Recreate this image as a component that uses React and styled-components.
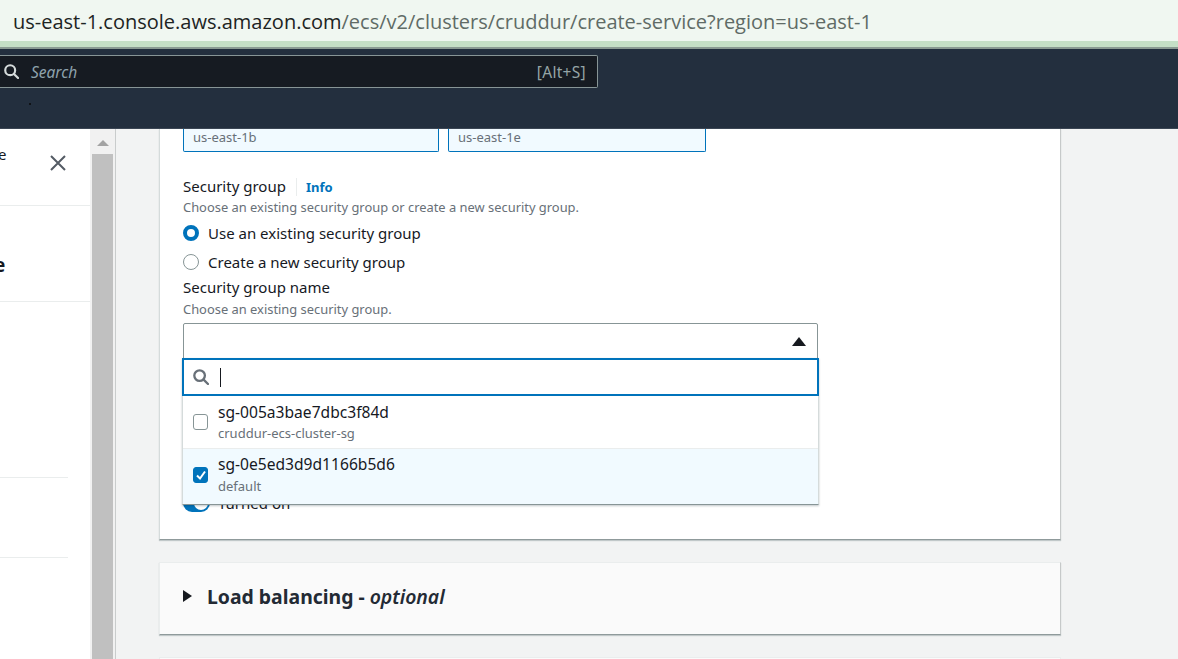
import React from 'react'
import styled, { createGlobalStyle } from 'styled-components'

const GlobalStyle = createGlobalStyle`
  html, body {
    margin: 0;
    padding: 0;
    height: 100%;
    overflow: hidden;
    background: #f2f3f3;
    font-family: "Noto Sans", "Open Sans", sans-serif;
  }
  * { box-sizing: border-box; }
`

const Page = styled.div`
  width: 1178px;
  height: 659px;
  display: flex;
  flex-direction: column;
  overflow: hidden;
`

// browser chrome
const UrlBar = styled.div`
  height: 41px;
  flex: none;
  background: #f0f7f1;
  padding-left: 13px;
  font-family: "Open Sans", sans-serif;
  font-size: 20px;
  line-height: 43px;
  color: #5f6b66;
  white-space: nowrap;
  span { color: #1d2423; }
`
const GreenStripe = styled.div`
  height: 8px;
  flex: none;
  background: #c5dfc6;
  border-bottom: 2px solid #8a9a92;
`

// aws top nav
const TopNav = styled.div`
  height: 80px;
  flex: none;
  background: #232f3e;
  padding-top: 6px;
  border-bottom: 1px solid #3b4654;
`
const SearchBox = styled.div`
  width: 598px;
  height: 33px;
  display: flex;
  align-items: center;
  background: #161b22;
  border: 1px solid #879596;
  border-left: none;
  border-radius: 0 2px 2px 0;
  padding: 0 11px 0 4px;
  color: #d5dbdb;
  svg { flex: none; }
`
const SearchHint = styled.span`
  margin-left: 12px;
  font-size: 15.5px;
  font-style: italic;
  color: #8ea2ad;
  flex: 1;
`
const Shortcut = styled.span`
  font-size: 15.5px;
  letter-spacing: 0.3px;
  color: #95a5a6;
`
const Dot = styled.div`
  width: 2px;
  height: 2px;
  margin: 15px 0 0 29px;
  background: #0f1216;
`

const Body = styled.div`
  flex: 1;
  min-height: 0;
  display: flex;
`

// left help panel
const HelpPanel = styled.aside`
  width: 90px;
  flex: none;
  background: #fff;
  overflow: hidden;
`
const HelpHead = styled.div`
  height: 77px;
  display: flex;
  justify-content: space-between;
  padding: 15px 24px 0 0;
  border-bottom: 1px solid #eaeded;
  font-size: 15px;
  color: #16191f;
  line-height: 20px;
  span { margin-left: -2px; }
  svg { margin-top: 11px; }
`
const HelpTitle = styled.div`
  height: 96px;
  padding-top: 47px;
  border-bottom: 1px solid #eaeded;
  font-size: 19px;
  font-weight: 700;
  line-height: 24px;
  color: #16191f;
  text-indent: -6px;
`
const HelpRule = styled.div`
  width: 68px;
  height: ${p => p.$height}px;
  border-bottom: 1px solid #eaeded;
`

const Scrollbar = styled.div`
  width: 25px;
  flex: none;
  display: flex;
  flex-direction: column;
  background: #f1f1f1;
  padding: 0 2px;
`
const ScrollArrow = styled.div`
  height: 25px;
  flex: none;
  display: flex;
  justify-content: center;
  padding-top: 11px;
  &::before {
    content: '';
    border-left: 6px solid transparent;
    border-right: 6px solid transparent;
    border-bottom: 6px solid #a3a3a3;
    height: 0;
  }
`
const ScrollThumb = styled.div`
  flex: 1;
  background: #c0c0c0;
`

// main content
const Content = styled.main`
  flex: 1;
  min-width: 0;
  border-left: 1px solid #c9cccc;
  padding-left: 43px;
  background: #f2f3f3;
  overflow: hidden;
`
const Card = styled.section`
  width: 902px;
  height: 411px;
  background: #fff;
  border-left: 1px solid #d5dbdb;
  border-right: 1px solid #c6c9c9;
  border-bottom: 1px solid #8f9a9b;
  box-shadow: 0 1px 1px rgba(0, 28, 36, 0.2);
  padding: 0 23px;
`
const Zones = styled.div`
  display: flex;
  gap: 9px;
`
const Zone = styled.div`
  width: ${p => p.$width}px;
  height: 23px;
  background: #f1faff;
  border: 1px solid #0073bb;
  border-top: none;
  border-radius: 0 0 2px 2px;
  padding-left: 9px;
  font-size: 13px;
  line-height: 16px;
  color: #687078;
`
const LabelRow = styled.div`
  display: flex;
  align-items: center;
  margin-top: 24px;
  height: 20px;
`
const Label = styled.div`
  font-size: 15px;
  line-height: 20px;
  margin-top: ${p => p.$top || 0}px;
  color: #16191f;
`
const InfoLink = styled.a`
  margin: 2px 0 0 10px;
  padding-left: 9px;
  border-left: 1px solid #eaeded;
  font-size: 13px;
  font-weight: 700;
  line-height: 18px;
  color: #0073bb;
`
const Hint = styled.div`
  font-size: 12.9px;
  line-height: 20px;
  margin-top: ${p => p.$top || 0}px;
  color: #687078;
`
const RadioRow = styled.div`
  display: flex;
  align-items: center;
  gap: 9px;
  height: 20px;
  margin-top: ${p => p.$top}px;
  font-size: 15px;
  color: #16191f;
`
const Radio = styled.span`
  width: 16px;
  height: 16px;
  border-radius: 50%;
  flex: none;
  background: #fff;
  border: ${p => (p.$checked ? '4px solid #0073bb' : '1px solid #879596')};
`
const SelectWrap = styled.div`
  position: relative;
  width: 635px;
  height: 36px;
  margin-top: 4px;
`
const Trigger = styled.div`
  height: 36px;
  border: 1px solid #879596;
  border-radius: 2px 2px 0 0;
  background: #fff;
  display: flex;
  justify-content: flex-end;
  padding: 13px 11px 0 0;
  &::after {
    content: '';
    border-left: 7px solid transparent;
    border-right: 7px solid transparent;
    border-bottom: 9px solid #16191f;
    height: 0;
  }
`
const Popup = styled.div`
  position: absolute;
  top: 35px;
  left: -1px;
  width: 637px;
  background: #fff;
  border-left: 1px solid #d5dbdb;
  border-right: 1px solid #d5dbdb;
  border-bottom: 1px solid #879596;
  box-shadow: 0 1px 2px rgba(0, 28, 36, 0.25);
`
const FilterBox = styled.div`
  height: 38px;
  margin: 0 -1px;
  border: 2px solid #0073bb;
  display: flex;
  align-items: center;
  padding-left: 9px;
  color: #687078;
`
const Caret = styled.span`
  width: 1px;
  height: 19px;
  margin-left: 11px;
  background: #16191f;
`
const Option = styled.div`
  display: flex;
  height: ${p => p.$height}px;
  padding: ${p => (p.$selected ? 5 : 6)}px 0 0 10px;
  background: ${p => (p.$selected ? '#f1faff' : '#fff')};
  border-top: ${p => (p.$selected ? '1px solid #eaeded' : 'none')};
`
const Box = styled.span`
  width: 15px;
  height: 16px;
  margin: ${p => (p.$checked ? 13 : 12)}px 10px 0 0;
  flex: none;
  border-radius: 3px;
  display: flex;
  align-items: center;
  justify-content: center;
  background: ${p => (p.$checked ? '#0073bb' : '#fff')};
  border: 1px solid ${p => (p.$checked ? '#0073bb' : '#879596')};
`
const OptionId = styled.div`
  font-size: 15.6px;
  line-height: 20px;
  color: #16191f;
`
const OptionName = styled.div`
  font-size: 13px;
  line-height: 20px;
  margin-top: ${p => (p.$low ? 2 : 1)}px;
  color: #687078;
`
const Toggle = styled.div`
  position: absolute;
  top: 170px;
  left: 0;
  display: flex;
  align-items: center;
  gap: 8px;
  font-size: 15px;
  color: #16191f;
`
const ToggleTrack = styled.span`
  width: 27px;
  height: 18px;
  border-radius: 9px;
  background: #0073bb;
  display: flex;
  justify-content: flex-end;
  align-items: center;
  padding-right: 2px;
  &::after {
    content: '';
    width: 14px;
    height: 14px;
    border-radius: 50%;
    background: #fff;
  }
`

const Accordion = styled.section`
  width: 902px;
  height: 73px;
  margin-top: 22px;
  background: #fafafa;
  border: 1px solid #eaeded;
  border-right-color: #c6c9c9;
  border-bottom: 1px solid #8f9a9b;
  box-shadow: 0 1px 1px rgba(0, 28, 36, 0.2);
  display: flex;
  align-items: center;
  padding: 0 0 5px 23px;
  font-size: 19.4px;
  font-weight: 700;
  color: #232a34;
  &::before {
    content: '';
    border-top: 6px solid transparent;
    border-bottom: 6px solid transparent;
    border-left: 9px solid #16191f;
    margin-right: 15px;
  }
  em { font-weight: 600; margin-left: 5px; }
`
const NextCard = styled.section`
  width: 902px;
  height: 20px;
  margin-top: 22px;
  background: #fafafa;
  border: 1px solid #eaeded;
`

const SearchIcon = ({ size }) => (
  <svg width={size} height={size} viewBox="0 0 16 16" fill="none" stroke="currentColor" strokeWidth="2.3">
    <circle cx="6.6" cy="6.6" r="5.3" />
    <path d="M10.6 10.6 15 15" strokeLinecap="round" />
  </svg>
)

const CloseIcon = () => (
  <svg width="16" height="16" viewBox="0 0 16 16" fill="none" stroke="#545b64" strokeWidth="2">
    <path d="M1 1l14 14M15 1 1 15" />
  </svg>
)

const CheckIcon = () => (
  <svg width="12" height="12" viewBox="0 0 12 12" fill="none" stroke="#fff" strokeWidth="2">
    <path d="M2 6.5 5 9.5 10 2.5" />
  </svg>
)

export default function App() {
  return (
    <Page>
      <GlobalStyle />
      <UrlBar>
        <span>us-east-1.console.aws.amazon.com</span>/ecs/v2/clusters/cruddur/create-service?region=us-east-1
      </UrlBar>
      <GreenStripe />
      <TopNav>
        <SearchBox>
          <SearchIcon size={15} />
          <SearchHint>Search</SearchHint>
          <Shortcut>[Alt+S]</Shortcut>
        </SearchBox>
        <Dot />
      </TopNav>
      <Body>
        <HelpPanel>
          <HelpHead>
            <span>e</span>
            <CloseIcon />
          </HelpHead>
          <HelpTitle>e</HelpTitle>
          <HelpRule $height={176} />
          <HelpRule $height={80} />
        </HelpPanel>
        <Scrollbar>
          <ScrollArrow />
          <ScrollThumb />
        </Scrollbar>
        <Content>
          <Card>
            <Zones>
              <Zone $width={256}>us-east-1b</Zone>
              <Zone $width={258}>us-east-1e</Zone>
            </Zones>
            <LabelRow>
              <Label>Security group</Label>
              <InfoLink>Info</InfoLink>
            </LabelRow>
            <Hint $top={1}>Choose an existing security group or create a new security group.</Hint>
            <RadioRow $top={6}>
              <Radio $checked />
              Use an existing security group
            </RadioRow>
            <RadioRow $top={9}>
              <Radio />
              Create a new security group
            </RadioRow>
            <Label $top={5}>Security group name</Label>
            <Hint $top={2}>Choose an existing security group.</Hint>
            <SelectWrap>
              <Trigger />
              <Toggle>
                <ToggleTrack />
                Turned on
              </Toggle>
              <Popup>
                <FilterBox>
                  <SearchIcon size={16} />
                  <Caret />
                </FilterBox>
                <Option $height={52}>
                  <Box />
                  <div>
                    <OptionId>sg-005a3bae7dbc3f84d</OptionId>
                    <OptionName>cruddur-ecs-cluster-sg</OptionName>
                  </div>
                </Option>
                <Option $height={56} $selected>
                  <Box $checked>
                    <CheckIcon />
                  </Box>
                  <div>
                    <OptionId>sg-0e5ed3d9d1166b5d6</OptionId>
                    <OptionName $low>default</OptionName>
                  </div>
                </Option>
              </Popup>
            </SelectWrap>
          </Card>
          <Accordion>
            Load balancing -<em>optional</em>
          </Accordion>
          <NextCard />
        </Content>
      </Body>
    </Page>
  )
}
